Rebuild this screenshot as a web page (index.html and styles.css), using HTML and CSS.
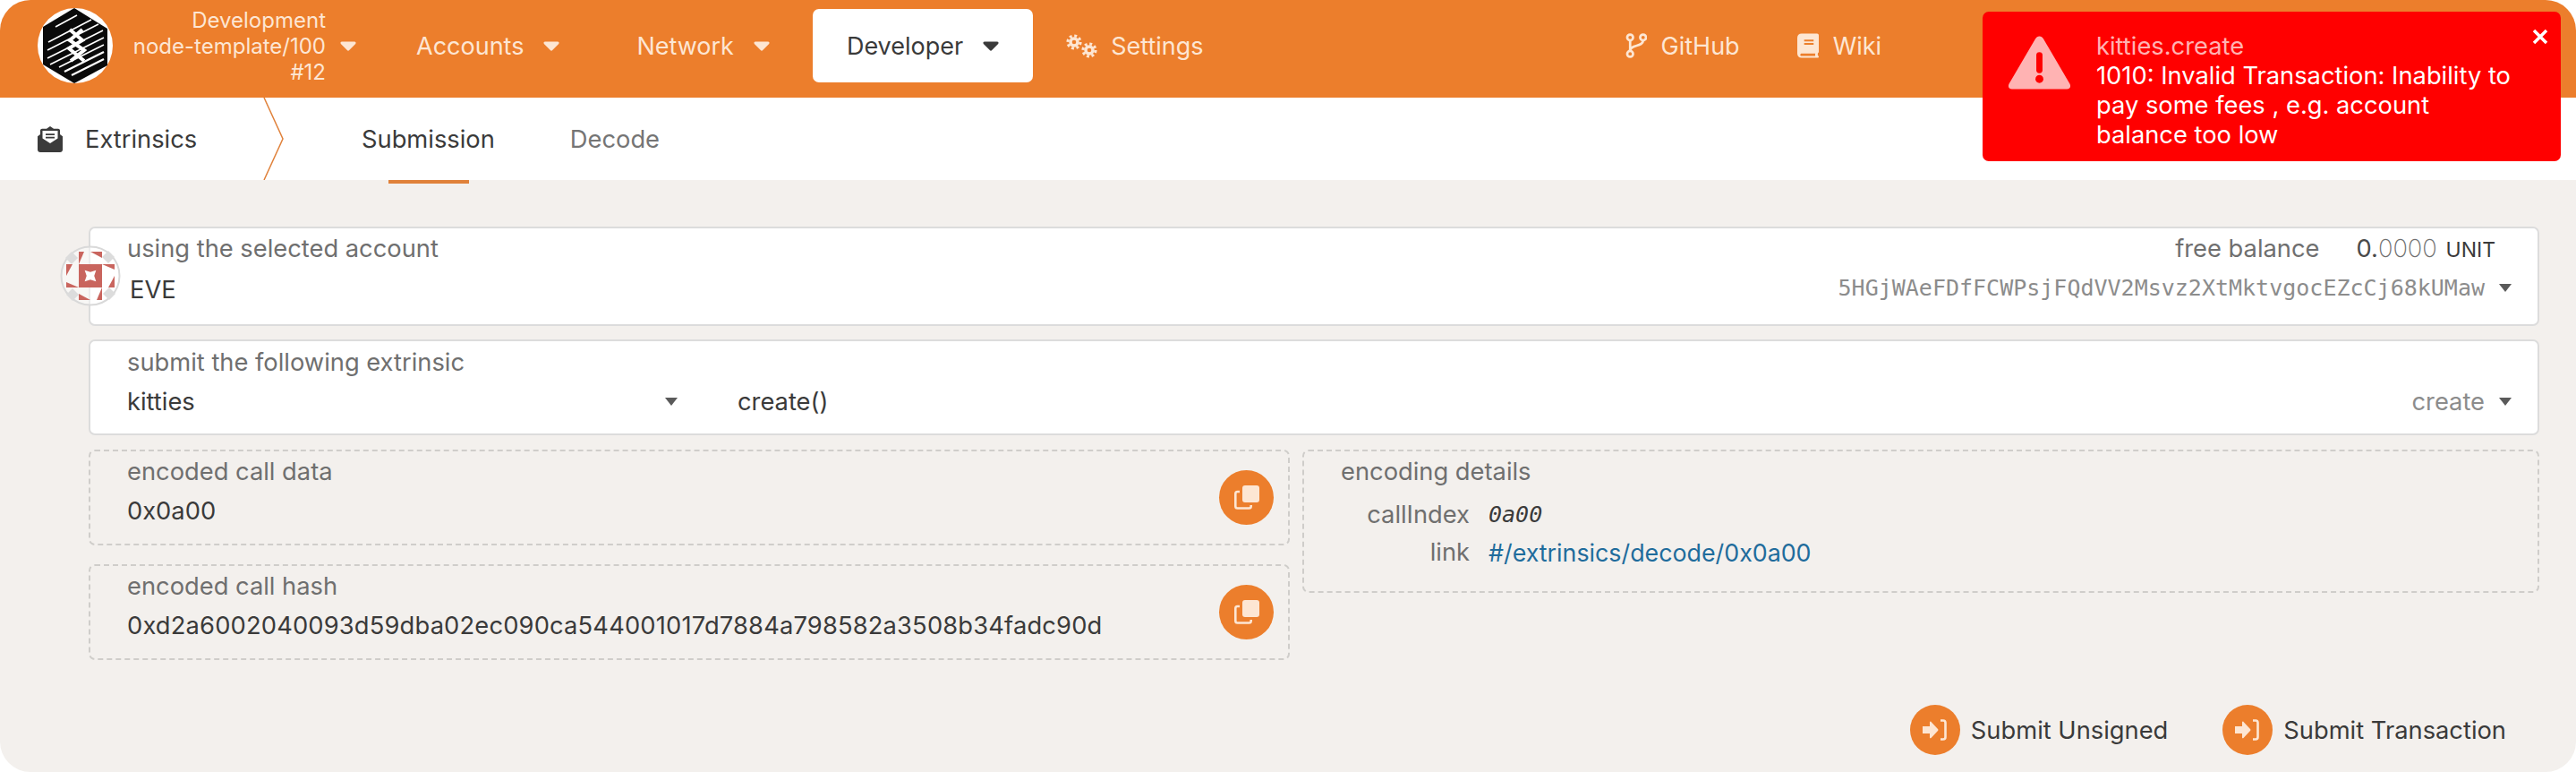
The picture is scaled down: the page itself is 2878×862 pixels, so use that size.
FILE: index.html
```html
<!DOCTYPE html>
<html lang="en">
<head>
    <meta charset="UTF-8">
    <title>Extrinsics</title>
    <link rel="stylesheet" href="styles.css">
</head>
<body>
    <div class="app">
        <header class="topbar">
            <svg class="logo" viewBox="0 0 84 84">
                <circle cx="42" cy="42" r="42" fill="#fff"/>
                <polygon points="41,0 78,23 78,64 41,84 6,63 6,21" fill="#0a0a0a"/>
                <g stroke="#fff" stroke-width="1.6">
                    <path d="M44 8 L20 21"/>
                    <path d="M60 13 L12 38"/>
                    <path d="M68 18 L11 47"/>
                    <path d="M73 25 L11 56"/>
                    <path d="M74 33 L14 63"/>
                    <path d="M74 41 L24 66"/>
                    <path d="M74 49 L30 71" stroke-width="2.2"/>
                    <path d="M74 57 L38 75" stroke-width="2.2"/>
                </g>
                <path d="M36 24 L50 36 L35 45 L52 59 M50 24 L36 36 L52 47 L37 59" fill="none" stroke="#fff" stroke-width="4"/>
            </svg>
            <div class="chain">
                <div class="chain-text">
                    <div>Development</div>
                    <div>node-template/100</div>
                    <div>#12</div>
                </div>
                <svg class="caret" viewBox="0 0 18 11"><path d="M2 0.5h14c1.4 0 2 1.4 1.2 2.4l-7 7.2c-.7.7-1.7.7-2.4 0L.8 2.9C0 1.9.6.5 2 .5z"/></svg>
            </div>
            <nav class="menu">
                <a class="menu-item">Accounts <svg class="caret" viewBox="0 0 18 11"><path d="M2 0.5h14c1.4 0 2 1.4 1.2 2.4l-7 7.2c-.7.7-1.7.7-2.4 0L.8 2.9C0 1.9.6.5 2 .5z"/></svg></a>
                <a class="menu-item">Network <svg class="caret" viewBox="0 0 18 11"><path d="M2 0.5h14c1.4 0 2 1.4 1.2 2.4l-7 7.2c-.7.7-1.7.7-2.4 0L.8 2.9C0 1.9.6.5 2 .5z"/></svg></a>
                <a class="menu-item active">Developer <svg class="caret" viewBox="0 0 18 11"><path d="M2 0.5h14c1.4 0 2 1.4 1.2 2.4l-7 7.2c-.7.7-1.7.7-2.4 0L.8 2.9C0 1.9.6.5 2 .5z"/></svg></a>
                <a class="menu-item settings">
                    <svg class="icon-cogs" viewBox="0 0 35 27">
                        <g fill="none" stroke="currentColor">
                            <circle cx="9" cy="9" r="4" stroke-width="3.4"/>
                            <circle cx="9" cy="9" r="7" stroke-width="3.2" stroke-dasharray="2.9 2.6"/>
                            <circle cx="26" cy="18" r="4" stroke-width="3.4"/>
                            <circle cx="26" cy="18" r="7" stroke-width="3.2" stroke-dasharray="2.9 2.6"/>
                        </g>
                    </svg>
                    Settings
                </a>
            </nav>
            <nav class="menu links">
                <a class="menu-item">
                    <svg class="icon-link" viewBox="0 0 24 29">
                        <g fill="none" stroke="currentColor" stroke-width="2.8">
                            <circle cx="5" cy="5" r="3.4"/>
                            <circle cx="5" cy="24" r="3.4"/>
                            <circle cx="20" cy="5" r="3.4"/>
                            <path d="M5 8.500v12M20 8.500c0 8-15 4-15 12"/>
                        </g>
                    </svg>
                    GitHub
                </a>
                <a class="menu-item">
                    <svg class="icon-link" viewBox="0 0 25 28"><path d="M5 0h18c1.200 0 2 .8 2 2v19c0 .8-.4 1.300-1 1.600-.3 1-.3 1.800 0 2.800.6.3 1 .8 1 1.600 0 .6-.4 1-1 1H5c-3 0-5-2-5-5V5c0-3 2-5 5-5zm3 7v2h11V7H8zm0 4v2h11v-2H8zM5 23c-2 0-2 3 0 3h16c-.3-1-.3-2 0-3H5z" fill="currentColor" fill-rule="evenodd"/></svg>
                    Wiki
                </a>
            </nav>
        </header>

        <div class="subbar">
            <div class="section-title">
                <svg class="icon-section" viewBox="0 0 28 32" preserveAspectRatio="none">
                    <path d="M14 0l4 3h5c1 0 2 1 2 2v5l3 2.500V29c0 1.600-1.300 3-3 3H3c-1.700 0-3-1.400-3-3V12.500L3 10V5c0-1 1-2 2-2h5l4-3z" fill="#3b3b3b"/>
                    <path d="M5.500 5.500h17v9.500L14 21l-8.500-6z" fill="#fff"/>
                    <path d="M9 9h10v2H9zM9 13h10v2H9z" fill="#3b3b3b"/>
                </svg>
                Extrinsics
            </div>
            <svg class="chevron" viewBox="0 0 24 92"><path d="M1 0 L22 46 L1 92" fill="none" stroke="#e0813a" stroke-width="1.500"/></svg>
            <div class="tabs">
                <a class="tab active">Submission</a>
                <a class="tab">Decode</a>
            </div>
        </div>

        <main class="content">
            <div class="card account-card">
                <svg class="avatar" viewBox="-34 -34 68 68">
                    <defs>
                        <g id="quarter">
                            <polygon points="-13,-13 -7,-27 -13,-27" fill="#c9655e"/>
                            <polygon points="0,-27 13,-27 13,-20" fill="#c9655e"/>
                            <polygon points="-20,-27 -13,-20 -20,-13 -27,-20" fill="#dcdcdc" transform="translate(-1,0)"/>
                        </g>
                    </defs>
                    <circle r="32.500" fill="rgba(255,255,255,0.45)" stroke="#d9d9d9" stroke-width="2"/>
                    <use href="#quarter"/>
                    <use href="#quarter" transform="rotate(90)"/>
                    <use href="#quarter" transform="rotate(180)"/>
                    <use href="#quarter" transform="rotate(270)"/>
                    <rect x="-13" y="-13" width="26" height="26" fill="#c9655e"/>
                    <path d="M0 -9 L3 -3 L9 0 L3 3 L0 9 L-3 3 L-9 0 L-3 -3z" fill="#fff" transform="rotate(45)"/>
                </svg>
                <div class="row">
                    <span class="label">using the selected account</span>
                    <span class="balance">
                        <span class="label balance-label">free balance</span>
                        <span class="amount"><b>0.</b><i>0000</i> <small>UNIT</small></span>
                    </span>
                </div>
                <div class="row row-value">
                    <span class="value account-name">EVE</span>
                    <span class="side">
                        <span class="address">5HGjWAeFDfFCWPsjFQdVV2Msvz2XtMktvgocEZcCj68kUMaw</span>
                        <svg class="caret-small" viewBox="0 0 14 9"><path d="M0 0h14L7 9z"/></svg>
                    </span>
                </div>
            </div>

            <div class="card extrinsic-card">
                <div class="row">
                    <span class="label">submit the following extrinsic</span>
                </div>
                <div class="row row-value">
                    <div class="section-select">
                        <span class="value">kitties</span>
                        <svg class="caret-small" viewBox="0 0 14 9"><path d="M0 0h14L7 9z"/></svg>
                    </div>
                    <span class="value method">create()</span>
                    <span class="side">
                        <span class="hint">create</span>
                        <svg class="caret-small" viewBox="0 0 14 9"><path d="M0 0h14L7 9z"/></svg>
                    </span>
                </div>
            </div>

            <div class="details">
                <div class="details-col">
                    <div class="box">
                        <div class="box-text">
                            <div class="label">encoded call data</div>
                            <div class="value">0x0a00</div>
                        </div>
                        <button class="round-btn">
                            <svg class="icon-copy" viewBox="0 0 28 27">
                                <rect x="9" y="0" width="19" height="19" rx="3" fill="currentColor"/>
                                <path d="M6 7H3.500C2 7 1.300 7.800 1.300 9.300V23.200C1.300 24.700 2 25.500 3.500 25.500H16.500C18 25.500 18.700 24.700 18.700 23.200V22" fill="none" stroke="currentColor" stroke-width="2.600"/>
                            </svg>
                        </button>
                    </div>
                    <div class="box">
                        <div class="box-text">
                            <div class="label">encoded call hash</div>
                            <div class="value hash">0xd2a6002040093d59dba02ec090ca544001017d7884a798582a3508b34fadc90d</div>
                        </div>
                        <button class="round-btn">
                            <svg class="icon-copy" viewBox="0 0 28 27">
                                <rect x="9" y="0" width="19" height="19" rx="3" fill="currentColor"/>
                                <path d="M6 7H3.500C2 7 1.300 7.800 1.300 9.300V23.200C1.300 24.700 2 25.500 3.500 25.500H16.500C18 25.500 18.700 24.700 18.700 23.200V22" fill="none" stroke="currentColor" stroke-width="2.600"/>
                            </svg>
                        </button>
                    </div>
                </div>
                <div class="box encoding">
                    <div class="label">encoding details</div>
                    <div class="encoding-grid">
                        <span class="label">callIndex</span>
                        <span class="call-index">0a00</span>
                        <span class="label">link</span>
                        <a class="link">#/extrinsics/decode/0x0a00</a>
                    </div>
                </div>
            </div>

            <div class="actions">
                <a class="action">
                    <span class="round-btn small">
                        <svg class="icon-submit" viewBox="0 0 28 24">
                            <path d="M0 8h8V3.500c0-.8.900-1.200 1.500-.6l7.500 8c.6.600.6 1.400 0 2l-7.500 8.100c-.6.600-1.500.2-1.500-.6V16H0z" fill="currentColor"/>
                            <path d="M20 1.500h3c1.500 0 2.500 1 2.500 2.500v16c0 1.500-1 2.500-2.500 2.500h-3" fill="none" stroke="currentColor" stroke-width="2.600"/>
                        </svg>
                    </span>
                    Submit Unsigned
                </a>
                <a class="action">
                    <span class="round-btn small">
                        <svg class="icon-submit" viewBox="0 0 28 24">
                            <path d="M0 8h8V3.500c0-.8.900-1.200 1.500-.6l7.500 8c.6.600.6 1.400 0 2l-7.500 8.100c-.6.600-1.500.2-1.500-.6V16H0z" fill="currentColor"/>
                            <path d="M20 1.500h3c1.500 0 2.500 1 2.500 2.500v16c0 1.500-1 2.500-2.500 2.500h-3" fill="none" stroke="currentColor" stroke-width="2.600"/>
                        </svg>
                    </span>
                    Submit Transaction
                </a>
            </div>
        </main>

        <div class="toast">
            <svg class="toast-icon" viewBox="0 0 72 62">
                <path d="M36 2c2 0 3.500 1 4.500 3l30 51c1.500 3 0 6-3.500 6H5c-3.500 0-5-3-3.500-6l30-51c1-2 2.500-3 4.500-3z" fill="#ffb3b3"/>
                <rect x="32.500" y="20" width="7" height="24" rx="3.500" fill="#ff0000"/>
                <ellipse cx="36" cy="50.500" rx="4.500" ry="4.500" fill="#ff0000"/>
            </svg>
            <div class="toast-text">
                <div class="toast-title">kitties.create</div>
                <div>1010: Invalid Transaction: Inability to pay some fees , e.g. account balance too low</div>
            </div>
            <svg class="toast-close" viewBox="0 0 18 18"><path d="M2 2L16 16M16 2L2 16" stroke="#fff" stroke-width="3.500"/></svg>
        </div>
    </div>
</body>
</html>
```

FILE: styles.css
```css
* {
    box-sizing: border-box;
}
body {
    margin: 0;
    background: white;
    font-family: Inter, "Noto Sans", sans-serif;
    font-size: 27.300px;
    color: #3a3a3a;
}
.app {
    position: relative;
    display: flex;
    flex-direction: column;
    width: 2878px;
    height: 862px;
    overflow: hidden;
    background: #f3f0ed;
    border-radius: 34px;
}

/* top bar */
.topbar {
    display: flex;
    align-items: center;
    flex: none;
    height: 109px;
    padding: 0 0 7px 42px;
    background: #ec7e2c;
    color: #fde6d3;
    font-size: 27px;
}
.logo {
    width: 84px;
    height: 84px;
    flex: none;
}
.chain {
    display: flex;
    align-items: center;
    flex: none;
    width: 272px;
    justify-content: flex-end;
    gap: 16px;
    margin-right: 29px;
}
.chain-text {
    text-align: right;
    font-size: 24px;
    line-height: 29px;
}
.caret {
    width: 18px;
    height: 11px;
    fill: currentColor;
}
.menu {
    display: flex;
    align-items: center;
    gap: 10px;
}
.menu-item {
    display: flex;
    align-items: center;
    gap: 22px;
    height: 82px;
    padding: 0 38px;
    border-radius: 7px;
}
.menu-item.active {
    background: white;
    color: #3a3a3a;
}
.menu-item.settings {
    gap: 15px;
    padding-left: 27px;
}
.icon-cogs {
    width: 35px;
    height: 27px;
}
.links {
    margin-left: 401px;
    gap: 0;
}
.links .menu-item {
    gap: 16px;
    padding: 0 32px;
}
.icon-link {
    width: 24px;
    height: 28px;
}

/* section bar */
.subbar {
    display: flex;
    align-items: center;
    flex: none;
    height: 92px;
    padding-left: 42px;
    background: white;
}
.section-title {
    display: flex;
    align-items: center;
    gap: 25px;
    width: 252px;
}
.icon-section {
    width: 28px;
    height: 29px;
}
.chevron {
    width: 24px;
    height: 92px;
    flex: none;
}
.tabs {
    display: flex;
    height: 100%;
    margin-left: 86px;
    gap: 84px;
}
.tab {
    position: relative;
    display: flex;
    align-items: center;
    color: #757575;
}
.tab.active {
    color: #3a3a3a;
}
.tab.active::after {
    content: "";
    position: absolute;
    left: 30px;
    right: 29px;
    bottom: -4px;
    height: 4px;
    background: #e0813a;
}

/* page */
.content {
    flex: 1;
    padding: 52px 41px 0 99px;
}
.card {
    position: relative;
    background: white;
    border: 2px solid #dcdcdc;
    border-radius: 7px;
    padding: 0 29px 0 41px;
}
.account-card {
    height: 111px;
    margin-bottom: 15px;
}
.extrinsic-card {
    height: 107px;
    padding-top: 1px;
    margin-bottom: 16px;
}
.avatar {
    position: absolute;
    left: -34px;
    top: 19px;
    width: 68px;
    height: 68px;
}
.row {
    display: flex;
    align-items: center;
    justify-content: space-between;
    height: 44px;
}
.label {
    color: #6f6f6f;
}
.value {
    color: #3a3a3a;
}
.account-name {
    margin-left: 3px;
    margin-top: 4px;
}
.balance {
    display: flex;
    align-items: center;
    gap: 41px;
    padding-right: 18px;
}
.amount b {
    font-weight: 400;
    color: #4a4a4a;
}
.amount i {
    font-style: normal;
    font-weight: 200;
    color: #6f6f6f;
}
.amount small {
    font-size: 23px;
    margin-left: 2px;
}
.side {
    display: flex;
    align-items: center;
    gap: 16px;
    margin-left: auto;
}
.address {
    font-family: "DejaVu Sans Mono", monospace;
    font-size: 25px;
    color: #8c8c8c;
}
.hint {
    color: #8c8c8c;
}
.caret-small {
    width: 14px;
    height: 9px;
    fill: #5a5a5a;
}
.section-select {
    display: flex;
    align-items: center;
    justify-content: space-between;
    width: 615px;
}
.method {
    margin-left: 67px;
}

/* encoded boxes */
.details {
    display: grid;
    grid-template-columns: 1342px 1fr;
    gap: 14px;
    align-items: start;
}
.details-col {
    display: flex;
    flex-direction: column;
    gap: 21px;
}
.box {
    display: flex;
    align-items: center;
    justify-content: space-between;
    height: 107px;
    padding: 0 16px 0 41px;
    border: 2px dashed #cfcdca;
    border-radius: 7px;
}
.box-text {
    padding-bottom: 14px;
}
.box-text .label {
    margin-bottom: 11px;
}
.hash {
    letter-spacing: 0.170px;
}
.box.encoding {
    display: block;
    height: 160px;
    padding-top: 6px;
}
.encoding-grid {
    display: grid;
    grid-template-columns: 144px 1fr;
    column-gap: 21px;
    row-gap: 9px;
    align-items: center;
    margin-top: 15px;
}
.encoding-grid .label {
    text-align: right;
}
.call-index {
    font-family: "DejaVu Sans Mono", monospace;
    font-style: italic;
    font-size: 25px;
}
.link {
    color: #1f6c9c;
    font-size: 26.800px;
}
.round-btn {
    display: flex;
    align-items: center;
    justify-content: center;
    flex: none;
    width: 61px;
    height: 61px;
    padding: 0;
    border: none;
    border-radius: 50%;
    background: #ec7e2c;
    color: #fde6d3;
}
.round-btn.small {
    width: 56px;
    height: 56px;
}
.icon-copy {
    width: 28px;
    height: 27px;
}
.icon-submit {
    width: 28px;
    height: 24px;
}
.actions {
    display: flex;
    justify-content: flex-end;
    gap: 61px;
    margin-top: 50px;
    padding-right: 37px;
}
.action {
    display: flex;
    align-items: center;
    gap: 12px;
}

/* error toast */
.toast {
    position: absolute;
    top: 13px;
    right: 17px;
    display: flex;
    width: 646px;
    height: 167px;
    padding: 22px 40px 0 28px;
    gap: 28px;
    background: #ff0000;
    border-radius: 7px;
    color: white;
    line-height: 33px;
}
.toast-icon {
    flex: none;
    width: 71px;
    height: 62px;
    margin-top: 3px;
}
.toast-title {
    color: #ffb3b3;
}
.toast-close {
    position: absolute;
    top: 19px;
    right: 14px;
    width: 18px;
    height: 18px;
}
```
